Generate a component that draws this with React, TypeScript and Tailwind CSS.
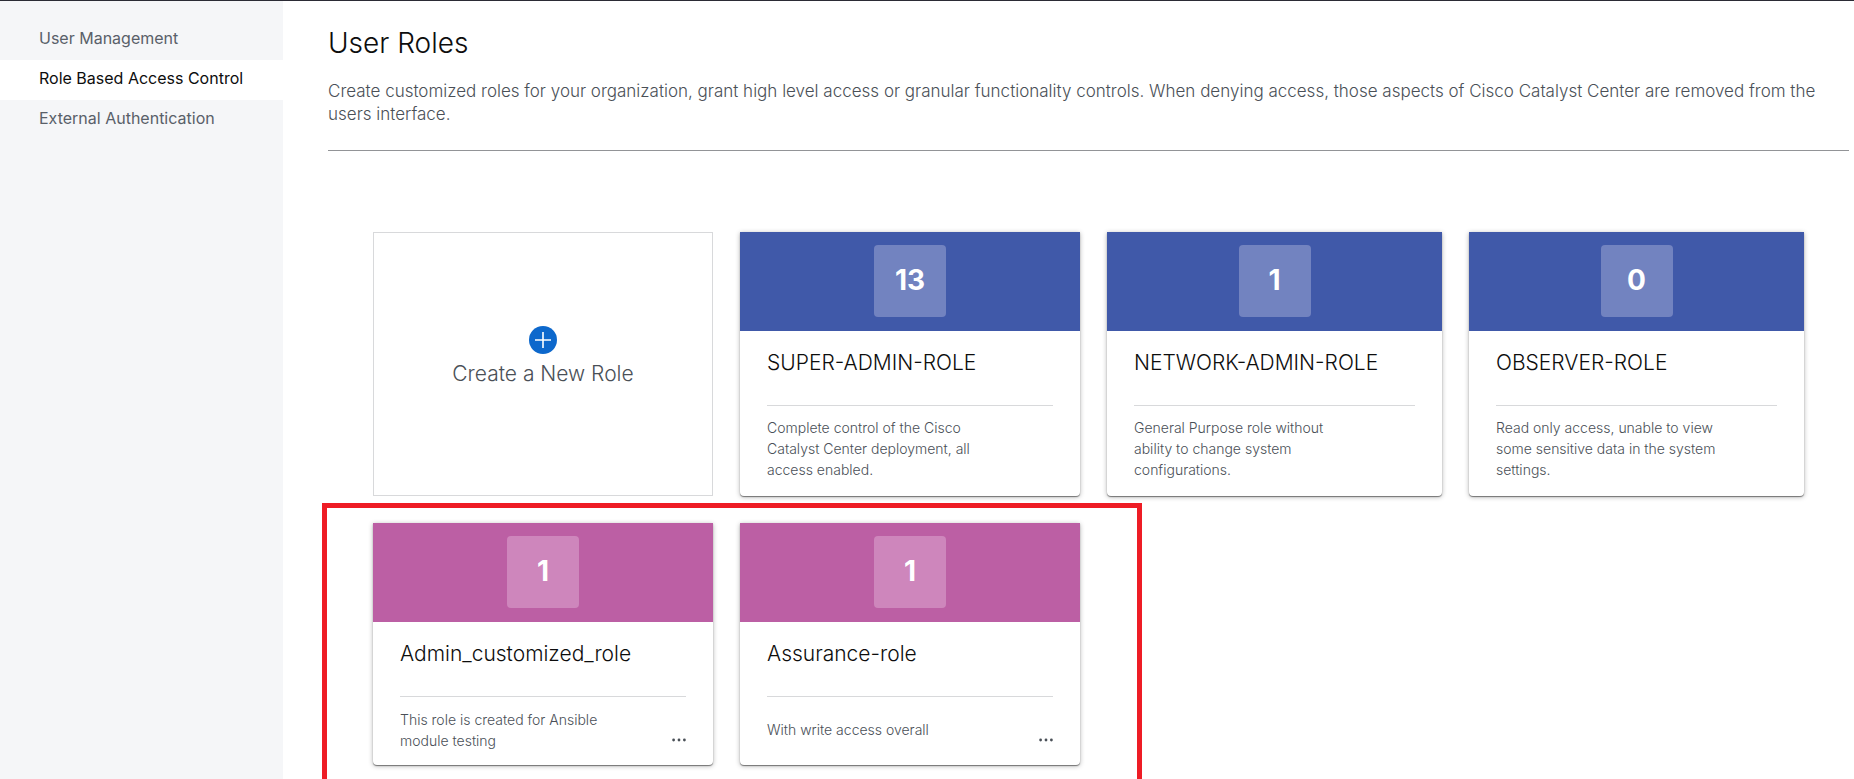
import React from "react";

type Role = {
  name: string;
  users: number;
  description: string;
};

const navItems = ["User Management", "Role Based Access Control", "External Authentication"];
const activeItem = "Role Based Access Control";

const defaultRoles: Role[] = [
  {
    name: "SUPER-ADMIN-ROLE",
    users: 13,
    description: "Complete control of the Cisco Catalyst Center deployment, all access enabled.",
  },
  {
    name: "NETWORK-ADMIN-ROLE",
    users: 1,
    description: "General Purpose role without ability to change system configurations.",
  },
  {
    name: "OBSERVER-ROLE",
    users: 0,
    description: "Read only access, unable to view some sensitive data in the system settings.",
  },
];

const customRoles: Role[] = [
  {
    name: "Admin_customized_role",
    users: 1,
    description: "This role is created for Ansible module testing",
  },
  {
    name: "Assurance-role",
    users: 1,
    description: "With write access overall",
  },
];

function Sidebar() {
  return (
    <nav aria-label="Settings" className="w-[283px] shrink-0 bg-[#f5f6f8] pt-[19px]">
      <ul>
        {navItems.map((item) => (
          <li key={item}>
            <a
              href="#"
              aria-current={item === activeItem ? "page" : undefined}
              className={
                item === activeItem
                  ? "block h-10 bg-white pl-[39px] text-base leading-[36px] text-[#0d0d0d]"
                  : "block h-10 pl-[39px] text-base leading-[36px] text-[#596069]"
              }
            >
              {item}
            </a>
          </li>
        ))}
      </ul>
    </nav>
  );
}

function CreateCard() {
  return (
    <button
      type="button"
      className="flex h-[264px] cursor-pointer flex-col items-center justify-center gap-1 border border-[#d8d9db] bg-white pb-3 text-[21px] font-light text-[#4a5057]"
    >
      <svg viewBox="0 0 28 28" className="size-7" aria-hidden="true">
        <circle cx="14" cy="14" r="14" fill="#0d68cc" />
        <path d="M14 6v16M6 14h16" stroke="#fff" strokeWidth="1.6" />
      </svg>
      <span className="leading-8">Create a New Role</span>
    </button>
  );
}

function RoleCard({ role, custom = false }: { role: Role; custom?: boolean }) {
  return (
    <article
      className={
        custom
          ? "flex h-[242px] flex-col rounded-b bg-white shadow-[0_1px_5px_rgba(0,0,0,0.3),0_1px_1px_rgba(0,0,0,0.45)]"
          : "flex h-[264px] flex-col rounded-b bg-white shadow-[0_1px_5px_rgba(0,0,0,0.3),0_1px_1px_rgba(0,0,0,0.45)]"
      }
    >
      <div
        className={
          custom
            ? "flex h-[99px] shrink-0 justify-center bg-[#bc5fa4] pt-[13px]"
            : "flex h-[99px] shrink-0 justify-center bg-[#4059a9] pt-[13px]"
        }
      >
        <span
          className={
            custom
              ? "size-[72px] rounded bg-[#ce86bc] text-center text-[28px] leading-[70px] font-bold text-white"
              : "size-[72px] rounded bg-[#7283c0] text-center text-[28px] leading-[70px] font-bold text-white"
          }
        >
          {role.users}
        </span>
      </div>
      <div className="px-[27px] pt-4">
        <h2 className="h-[59px] border-b border-[#d8d9db] text-[21px] leading-8 font-light text-[#0d0d0d]">
          {role.name}
        </h2>
        <div className={custom ? "flex h-[65px] items-center" : "flex h-[85px] items-center"}>
          <p className="w-[230px] text-sm leading-[21px] font-light text-[#4a5057]">
            {role.description}
          </p>
          {custom && (
            <button
              type="button"
              aria-label={`Actions for ${role.name}`}
              className="mt-5 ml-auto cursor-pointer text-[#4a5057]"
            >
              <svg viewBox="0 0 14 4" className="h-1 w-[14px]" fill="currentColor" aria-hidden="true">
                <circle cx="1.6" cy="2" r="1.4" />
                <circle cx="7" cy="2" r="1.4" />
                <circle cx="12.4" cy="2" r="1.4" />
              </svg>
            </button>
          )}
        </div>
      </div>
    </article>
  );
}

export default function App() {
  return (
    <div className="flex min-h-screen overflow-hidden border-t border-[#2b2b35] bg-white font-['Inter','Liberation_Sans',sans-serif]">
      <Sidebar />
      <main className="min-w-0 grow pt-6 pr-[5px] pl-[45px]">
        <header className="border-b border-[#929497] pb-6">
          <h1 className="text-[28px] leading-9 font-light text-[#0d0d0d]">User Roles</h1>
          <p className="mt-[19px] pr-8 text-[17px] leading-[23px] font-light text-[#4a5057]">
            Create customized roles for your organization, grant high level access or granular
            functionality controls. When denying access, those aspects of Cisco Catalyst Center are
            removed from the users interface.
          </p>
        </header>
        <section
          aria-label="Roles"
          className="px-[45px] pt-[81px]"
        >
          <div className="grid grid-cols-[340fr_340fr_335fr_335fr] gap-[27px]">
            <CreateCard />
            {defaultRoles.map((role) => (
              <RoleCard key={role.name} role={role} />
            ))}
            <div className="relative col-span-2 grid grid-cols-2 gap-[27px]">
              {customRoles.map((role) => (
                <RoleCard key={role.name} role={role} custom />
              ))}
              <div
                aria-hidden="true"
                className="pointer-events-none absolute -top-5 -right-[62px] -bottom-[14px] -left-[51px] border-[5px] border-b-0 border-[#ee1c25]"
              />
            </div>
          </div>
        </section>
      </main>
    </div>
  );
}
